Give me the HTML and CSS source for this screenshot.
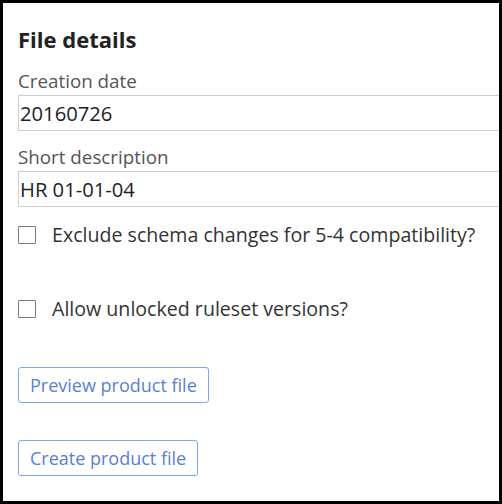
FILE: index.html
```html
<!DOCTYPE html>
<html>
<head>
<meta charset="utf-8">
<link rel="stylesheet" href="styles.css">
</head>
<body>
<div class="frame">
  <div class="panel">
    <h2 class="title">File details</h2>
    <div class="field">
      <label class="label">Creation date</label>
      <div class="input">20160726</div>
    </div>
    <div class="field">
      <label class="label">Short description</label>
      <div class="input">HR 01-01-04</div>
    </div>
    <div class="check first">
      <span class="box"></span>
      <span class="check-text">Exclude schema changes for 5-4 compatibility?</span>
    </div>
    <div class="check second">
      <span class="box"></span>
      <span class="check-text">Allow unlocked ruleset versions?</span>
    </div>
    <div class="actions">
      <button class="btn">Preview product file</button>
      <button class="btn">Create product file</button>
    </div>
  </div>
</div>
</body>
</html>
```

FILE: styles.css
```css
html, body {
  margin: 0;
  padding: 0;
  background: #000;
}
.frame {
  width: 502px;
  height: 504px;
  box-sizing: border-box;
  border: 3px solid #000;
  background: #fff;
  overflow: hidden;
  font-family: "Open Sans", "Noto Sans", sans-serif;
  color: #333;
}
.panel {
  padding: 21px 0 0 15px;
  display: flex;
  flex-direction: column;
}
.title {
  margin: 0;
  font-size: 22px;
  line-height: 30px;
  font-weight: 700;
  color: #222;
}
.field {
  display: flex;
  flex-direction: column;
  margin-top: 15px;
}
.field + .field {
  margin-top: 14px;
}
.label {
  font-size: 18.8px;
  line-height: 24px;
  color: #555;
}
.input {
  box-sizing: border-box;
  height: 36px;
  margin-top: 2px;
  width: calc(100% + 4px);
  border: 1px solid #cfcfcf;
  padding: 0 1px;
  font-size: 20.2px;
  line-height: 34px;
  color: #1e1e1e;
}
.check {
  display: flex;
  align-items: center;
  gap: 16px;
  height: 24px;
}
.check.first { margin-top: 16px; }
.check.second { margin-top: 50px; }
.box {
  width: 16px;
  height: 16px;
  border: 1px solid #7a7a7a;
  border-radius: 1px;
  flex: none;
}
.check-text {
  font-size: 19.6px;
  line-height: 24px;
  color: #333;
}
.actions {
  display: flex;
  flex-direction: column;
  align-items: flex-start;
  gap: 37px;
  margin-top: 46px;
}
.btn {
  height: 36px;
  box-sizing: border-box;
  border: 1px solid #7ea6ee;
  border-radius: 3px;
  background: #fff;
  padding: 0 11px;
  font-family: "Open Sans", "Noto Sans", sans-serif;
  font-size: 18px;
  color: #5a80d6;
  cursor: pointer;
}
```
